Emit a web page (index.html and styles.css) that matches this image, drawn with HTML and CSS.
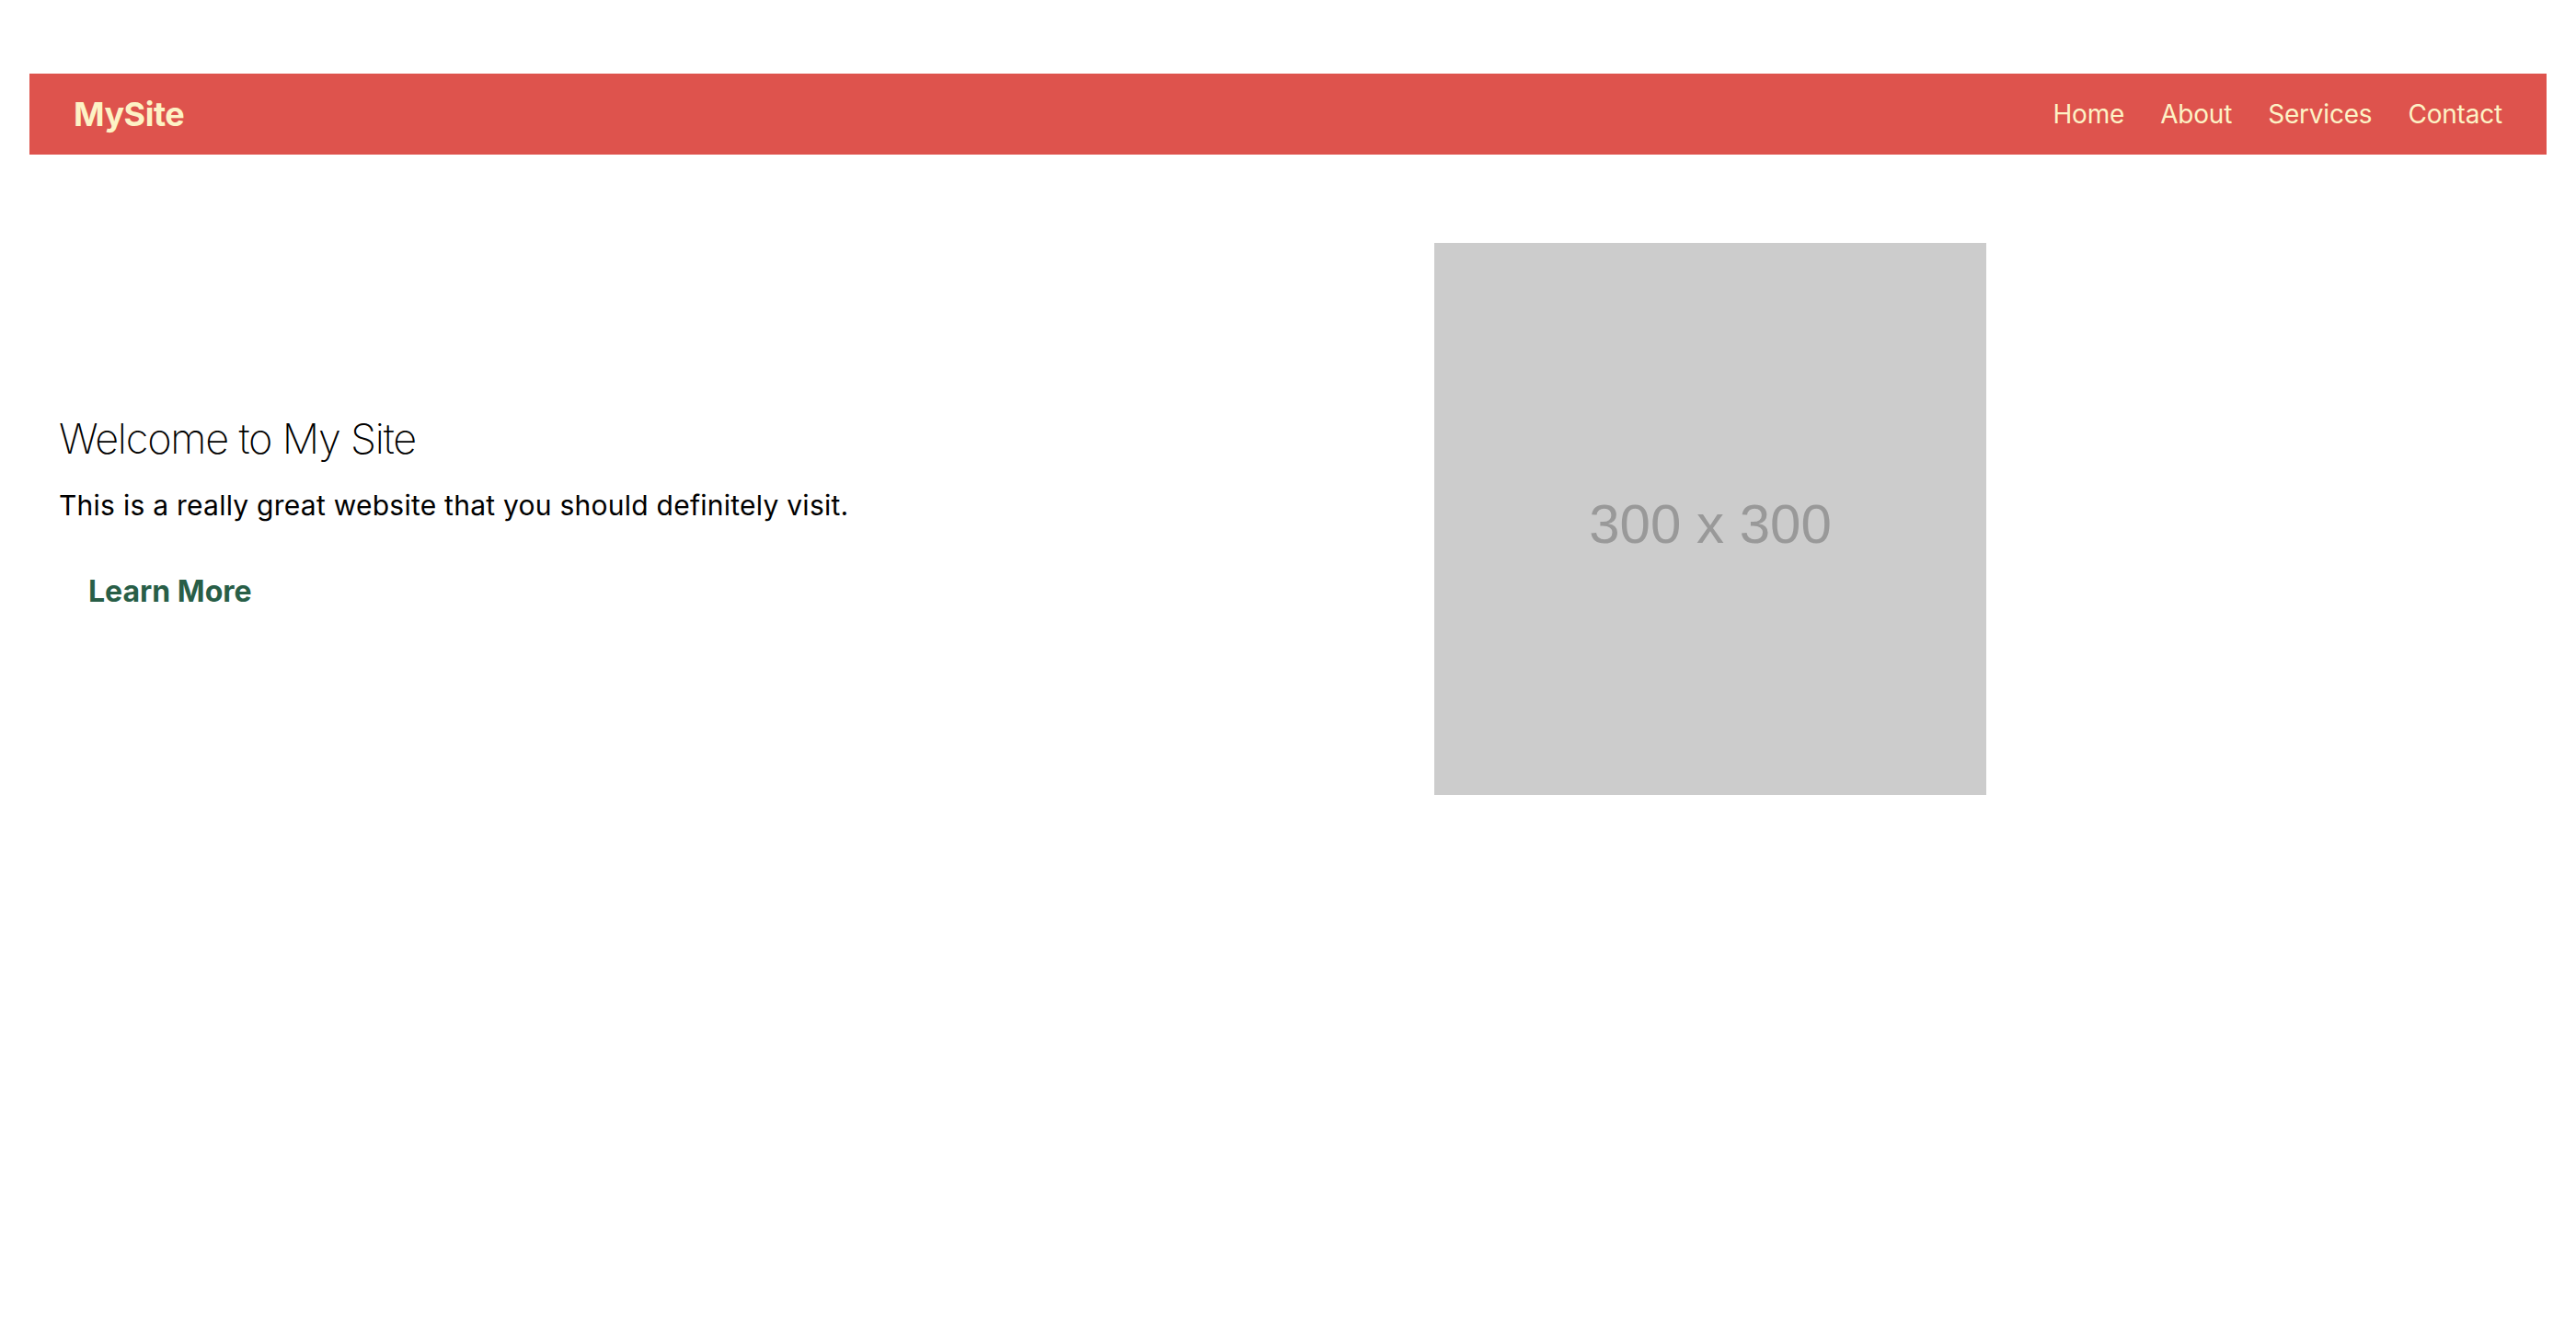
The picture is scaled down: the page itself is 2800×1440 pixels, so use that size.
FILE: index.html
```html
<!DOCTYPE html>
<html lang="en">
<head>
<meta charset="utf-8">
<title>MySite</title>
<link rel="stylesheet" href="styles.css">
</head>
<body>
<div class="page">
  <nav class="navbar">
    <a class="brand" href="#">MySite</a>
    <ul class="nav-links">
      <li><a href="#">Home</a></li>
      <li><a href="#">About</a></li>
      <li><a href="#">Services</a></li>
      <li><a href="#">Contact</a></li>
    </ul>
  </nav>
  <section class="hero">
    <div class="hero-text">
      <h1 class="hero-title">Welcome to My Site</h1>
      <p class="hero-sub">This is a really great website that you should definitely visit.</p>
      <button class="hero-btn" type="button">Learn More</button>
    </div>
    <div class="hero-image">
      <span class="placeholder-label">300 x 300</span>
    </div>
  </section>
</div>
</body>
</html>
```
FILE: styles.css
```css
html, body {
  margin: 0;
  padding: 0;
  background: #ffffff;
}

body {
  font-family: Inter, "Noto Sans", "Liberation Sans", sans-serif;
  color: #000000;
}

.page {
  padding: 80px 32px;
}

.navbar {
  height: 88px;
  background: #de534d;
  display: flex;
  align-items: center;
  justify-content: space-between;
  padding: 0 48px;
}

.brand {
  color: #fdf2c5;
  font-size: 36px;
  font-weight: 700;
  text-decoration: none;
  letter-spacing: -0.5px;
}

.nav-links {
  list-style: none;
  margin: 0;
  padding: 0;
  display: flex;
  gap: 39px;
}

.nav-links a {
  color: #fdf2c5;
  font-size: 28px;
  letter-spacing: -0.2px;
  text-decoration: none;
}

.hero {
  margin-top: 96px;
  display: flex;
  align-items: center;
  padding-left: 32px;
}

.hero-text {
  width: 1495px;
  display: flex;
  flex-direction: column;
  align-items: flex-start;
}

.hero-title {
  margin: 0 0 24px;
  font-size: 45px;
  line-height: 56px;
  font-weight: 200;
  letter-spacing: -1.2px;
}

.hero-sub {
  margin: 0 0 38px;
  font-size: 30px;
  line-height: 40px;
  letter-spacing: 0.25px;
}

.hero-btn {
  font-family: inherit;
  background: transparent;
  border: none;
  padding: 16px 32px;
  font-size: 32px;
  line-height: 40px;
  font-weight: 700;
  color: #285e47;
  cursor: pointer;
}

.hero-image {
  width: 600px;
  height: 600px;
  background: #cccccc;
  display: flex;
  align-items: center;
  justify-content: center;
}

.placeholder-label {
  font-family: "Liberation Sans", Arial, sans-serif;
  font-size: 60px;
  color: #999999;
  padding-top: 10px;
}
```
